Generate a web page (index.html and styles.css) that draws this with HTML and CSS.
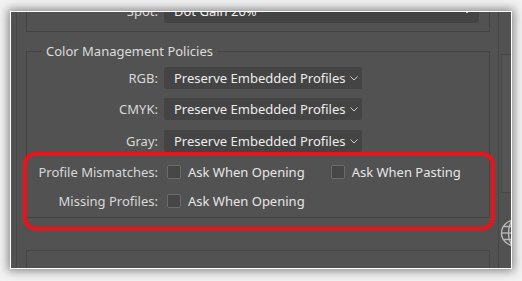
FILE: index.html
```html
<!DOCTYPE html>
<html lang="en">
<head>
<meta charset="utf-8">
<title>Color Settings</title>
<link rel="stylesheet" href="styles.css">
</head>
<body>
<div class="stage">
  <div class="panel">
    <div class="dialog">
      <div class="ws-group">
        <div class="row">
          <span class="label">Spot:</span>
          <div class="select select-wide">
            <span class="select-text">Dot Gain 20%</span>
            <svg class="chev" width="8" height="5" viewBox="0 0 8 5"><polyline points="0.5,0.5 4,4 7.5,0.5" fill="none" stroke="#cfcfcf" stroke-width="1"/></svg>
          </div>
        </div>
      </div>

      <fieldset class="policies">
        <legend>Color Management Policies</legend>
        <div class="row">
          <span class="label">RGB:</span>
          <div class="select">
            <span class="select-text">Preserve Embedded Profiles</span>
            <svg class="chev" width="8" height="5" viewBox="0 0 8 5"><polyline points="0.5,0.5 4,4 7.5,0.5" fill="none" stroke="#cfcfcf" stroke-width="1"/></svg>
          </div>
        </div>
        <div class="row">
          <span class="label">CMYK:</span>
          <div class="select">
            <span class="select-text">Preserve Embedded Profiles</span>
            <svg class="chev" width="8" height="5" viewBox="0 0 8 5"><polyline points="0.5,0.5 4,4 7.5,0.5" fill="none" stroke="#cfcfcf" stroke-width="1"/></svg>
          </div>
        </div>
        <div class="row">
          <span class="label">Gray:</span>
          <div class="select">
            <span class="select-text">Preserve Embedded Profiles</span>
            <svg class="chev" width="8" height="5" viewBox="0 0 8 5"><polyline points="0.5,0.5 4,4 7.5,0.5" fill="none" stroke="#cfcfcf" stroke-width="1"/></svg>
          </div>
        </div>
        <div class="row check-row first-check">
          <span class="label">Profile Mismatches:</span>
          <label class="check"><span class="box"></span><span>Ask When Opening</span></label>
          <label class="check check-second"><span class="box"></span><span>Ask When Pasting</span></label>
        </div>
        <div class="row check-row">
          <span class="label">Missing Profiles:</span>
          <label class="check"><span class="box"></span><span>Ask When Opening</span></label>
        </div>
      </fieldset>

      <div class="next-group"></div>
    </div>
    <div class="scroll">
      <div class="thumb"></div>
    </div>

    <div class="highlight"></div>
    <svg class="globe" width="30" height="30" viewBox="0 0 30 30">
      <g fill="none" stroke="#b9b9b9" stroke-width="1.4">
        <circle cx="15" cy="15" r="12.5"/>
        <ellipse cx="15" cy="15" rx="5.5" ry="12.5"/>
        <line x1="15" y1="2.5" x2="15" y2="27.5"/>
        <line x1="2.5" y1="15" x2="27.5" y2="15"/>
        <path d="M5 8.5 H25 M5 21.5 H25"/>
      </g>
    </svg>
  </div>
</div>
</body>
</html>
```
FILE: styles.css
```css
* { box-sizing: border-box; }

html, body {
  margin: 0;
  padding: 0;
  background: #f2f2f2;
}

body {
  width: 522px;
  height: 281px;
  overflow: hidden;
  font-family: "Noto Sans", "Open Sans", sans-serif;
  font-size: 13px;
  color: #d6d6d6;
}

.stage {
  padding: 11px 10px 12px 10px;
}

.panel {
  position: relative;
  height: 258px;
  background: #525252;
  border: 1px solid #ffffff;
  box-shadow: 0 0 9px 2px rgba(0, 0, 0, 0.45);
  overflow: hidden;
  display: flex;
}

.dialog {
  flex: 1;
  margin-left: 5px;
  border-left: 1px solid #474747;
  padding: 0 8px 0 9px;
}

.ws-group {
  margin-top: -12px;
  height: 32px;
  border: 1px solid #444;
  border-top: none;
  padding-top: 0;
}

.row {
  display: flex;
  align-items: center;
  height: 22px;
}

.label {
  width: 131px;
  text-align: right;
  flex: none;
  color: #d8d8d8;
  line-height: 22px;
  white-space: nowrap;
}

.select {
  margin-left: 6px;
  height: 22px;
  width: 198px;
  background: #444444;
  border-radius: 2px;
  display: flex;
  align-items: center;
  padding: 0 4px 0 10px;
  color: #ececec;
}

.select-wide {
  width: 315px;
  height: 23px;
  padding-right: 8px;
}

.select-text {
  flex: 1;
  white-space: nowrap;
}

.chev {
  flex: none;
  margin-top: 1px;
}

.policies {
  margin: 10px 0 0 0;
  padding: 0 0 5px 0;
  min-width: 0;
  border: 1px solid #444;
}

.policies legend {
  margin-left: 15px;
  padding: 0 4px;
  line-height: 18px;
  font-size: 13px;
  color: #dcdcdc;
}

.policies .row + .row {
  margin-top: 9.5px;
}

.policies .row:first-of-type {
  margin-top: 6.5px;
}

.policies .first-check {
  margin-top: 9.5px !important;
}

.policies .check-row + .check-row {
  margin-top: 7px !important;
}

.check {
  display: flex;
  align-items: center;
  margin-left: 9px;
  color: #e6e6e6;
  white-space: nowrap;
}

.box {
  width: 14px;
  height: 14px;
  border: 1px solid #6b6b6b;
  border-radius: 2px;
  background: #474747;
  margin-right: 7px;
}

.check-second {
  margin-left: 26px;
}

.next-group {
  margin-top: 32px;
  height: 30px;
  border: 1px solid #474747;
  border-bottom: none;
}

.scroll {
  width: 13px;
  flex: none;
  border-left: 1px solid #474747;
  padding-top: 42px;
  padding-left: 2px;
}

.thumb {
  height: 139px;
  border: 1px solid #474747;
  border-right: none;
  background: #545454;
}

.highlight {
  position: absolute;
  left: 12px;
  top: 140px;
  width: 472px;
  height: 79px;
  border: 4px solid #e8141a;
  border-radius: 13px;
}

.globe {
  position: absolute;
  left: 488px;
  top: 206px;
}
```
